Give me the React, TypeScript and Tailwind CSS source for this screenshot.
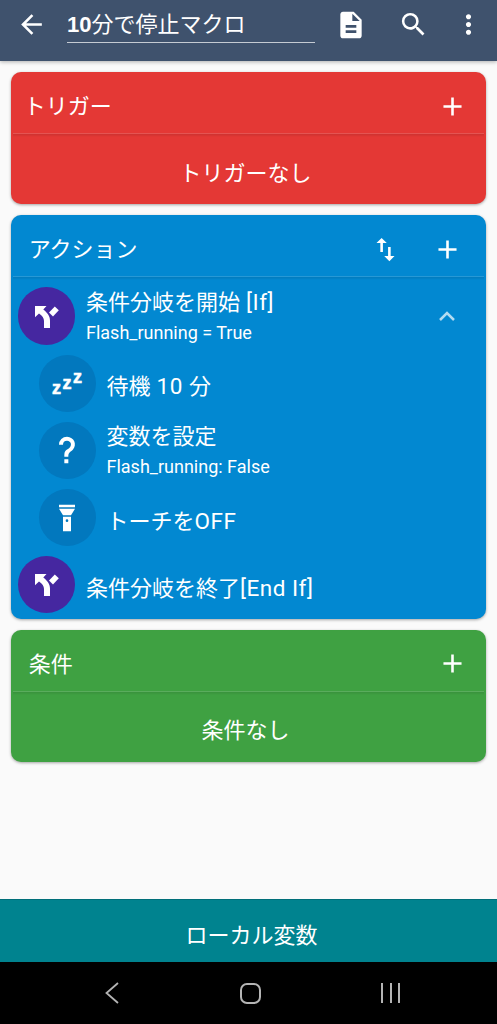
import type { ReactNode } from 'react';
import { MdAdd, MdArrowBack, MdDescription, MdMoreVert, MdSearch, MdSwapVert } from 'react-icons/md';

function SplitIcon() {
  return (
    <svg viewBox="0 0 24 23" className="ml-px h-[23px] w-6 translate-y-px" fill="currentColor">
      <path d="M0 0H11.5L8.3 3.6C12.8 7.2 15 10.3 15 14.8V22H9V15C9 12 7.4 9.6 4 7.4L0 11.3Z" />
      <path d="M19.8 .4L23.8 4.2L18 10.5L14 6.5Z" />
    </svg>
  );
}

function SleepIcon() {
  return (
    <svg
      viewBox="0 0 40 40"
      className="size-10 font-['Liberation_Sans'] text-[18px] font-bold"
      fill="currentColor"
      stroke="currentColor"
      strokeWidth=".6"
    >
      <text x="4.9" y="31">z</text>
      <text x="15.5" y="25.5">z</text>
      <text x="26" y="20.3">z</text>
    </svg>
  );
}

function HelpIcon() {
  return (
    <svg viewBox="0 0 24 24" className="size-8" fill="currentColor">
      <path d="M10 19h3v3h-3v-3m2-17c5.35.22 7.68 5.62 4.5 9.67-.83 1-2.17 1.66-2.83 2.5C13 15 13 16 13 17h-3c0-1.67 0-3.08.67-4.08.66-1 2-1.59 2.83-2.25C15.92 8.43 15.32 5.26 12 5a3 3 0 0 0-3 3H6a6 6 0 0 1 6-6z" />
    </svg>
  );
}

function TorchIcon() {
  return (
    <svg viewBox="0 0 24 24" className="size-8" fill="currentColor">
      <path d="M9 10L6 5h12l-3 5H9m9-6H6V2h12v2M9 22V11h6v11H9m3-9a1 1 0 0 0-1 1 1 1 0 0 0 1 1 1 1 0 0 0 1-1 1 1 0 0 0-1-1z" />
    </svg>
  );
}

function Divider() {
  return (
    <div className="mx-[2px] h-[4px] shrink-0 border-t border-white/15 bg-gradient-to-b from-black/10 to-transparent" />
  );
}

function Latin({ children }: { children: ReactNode }) {
  return <span className="text-[22.5px] tracking-[0.5px]">{children}</span>;
}

type RowProps = {
  icon: ReactNode;
  title: ReactNode;
  detail?: string;
  nested?: boolean;
  trailing?: ReactNode;
};

function ActionRow({ icon, title, detail, nested, trailing }: RowProps) {
  return (
    <div className={`flex h-[67.2px] items-center ${nested ? 'pl-[28px]' : 'pl-[7.5px]'}`}>
      <div
        className={`flex size-[57.3px] shrink-0 items-center justify-center rounded-full ${
          nested ? 'bg-[#0278be]' : 'bg-[#4527a0]'
        }`}
      >
        {icon}
      </div>
      <div className="ml-[10.5px] flex-1 whitespace-pre">
        <div className={detail ? 'mt-[3px] leading-[31px]' : 'mt-[7px] leading-[31px]'}>{title}</div>
        {detail && <div className="text-[18px] leading-[30px]">{detail}</div>}
      </div>
      {trailing}
    </div>
  );
}

function EmptyCard({ title, empty, className, titleClass }: { title: string; empty: string; className: string; titleClass: string }) {
  return (
    <section className={`flex h-[132px] flex-col rounded-[10px] shadow-[0_1px_3px_rgba(0,0,0,0.35)] ${className}`}>
      <div className="flex h-[61px] items-center justify-between pr-[18px] pt-[7px]">
        <h2 className={`pt-px ${titleClass}`}>{title}</h2>
        <MdAdd className="size-[31px]" />
      </div>
      <Divider />
      <p className="flex flex-1 items-center justify-center pr-[6px] pt-[5px]">{empty}</p>
    </section>
  );
}

export default function App() {
  return (
    <div className="flex h-[1024px] w-[497px] flex-col bg-[#fafafa] font-[Roboto,'Noto_Sans_CJK_JP',sans-serif] text-[22px] text-white">
      <header className="flex h-[61px] shrink-0 items-start bg-[#3f526d] pt-[9px] shadow-[0_1px_4px_rgba(0,0,0,0.3)]">
        <MdArrowBack className="ml-4 size-[31px]" />
        <div className="ml-5 h-[33.5px] w-[248px] border-b border-white/70 leading-[31px]">
          <span className="font-['Liberation_Sans'] font-bold">10</span>分で停止マクロ
        </div>
        <MdDescription className="ml-5 size-8" />
        <MdSearch className="ml-[31px] size-[31px]" />
        <MdMoreVert className="ml-[24px] size-[31px]" />
      </header>

      <main className="flex flex-1 flex-col gap-[11px] px-[10.7px] pt-[11px]">
        <EmptyCard title="トリガー" empty="トリガーなし" className="bg-[#e43835]" titleClass="pl-[13px]" />

        <section className="flex h-[403.5px] flex-col rounded-[10px] bg-[#0288d1] shadow-[0_1px_3px_rgba(0,0,0,0.35)]">
          <div className="flex h-[61px] items-center pl-[18px] pr-[23px] pt-[8px]">
            <h2 className="flex-1">アクション</h2>
            <MdSwapVert className="mr-[31px] size-[31px]" />
            <MdAdd className="size-[31px]" />
          </div>
          <Divider />
          <div className="mt-[2.5px]">
            <ActionRow
              icon={<SplitIcon />}
              title={<>条件分岐を開始<Latin> [If]</Latin></>}
              detail="Flash_running = True"
              trailing={
                <svg viewBox="0 0 16 10" className="mr-[31px] h-[10px] w-4" fill="none" stroke="#b3dbf1" strokeWidth="2.5">
                  <path d="M1 9L8 2L15 9" />
                </svg>
              }
            />
            <ActionRow nested icon={<SleepIcon />} title={<>待機<Latin> 10 </Latin>分</>} />
            <ActionRow nested icon={<HelpIcon />} title="変数を設定" detail="Flash_running: False" />
            <ActionRow nested icon={<TorchIcon />} title={<>トーチを<Latin>OFF</Latin></>} />
            <ActionRow icon={<SplitIcon />} title={<>条件分岐を終了<Latin>[End If]</Latin></>} />
          </div>
        </section>

        <EmptyCard title="条件" empty="条件なし" className="bg-[#3fa142]" titleClass="pl-[18px]" />
      </main>

      <div className="flex h-[63px] shrink-0 items-center justify-center border-t border-[#006f79] bg-[#00838f] pt-[8px] pl-[6px]">
        ローカル変数
      </div>

      <nav className="flex h-[62px] shrink-0 items-center bg-black text-[#b4b4b4]">
        <svg viewBox="0 0 14 22" className="ml-[105px] h-[22px] w-[14px]" fill="none" stroke="currentColor" strokeWidth="1.8">
          <path d="M13 1L1.5 11L13 21" />
        </svg>
        <div className="ml-[121px] size-[21px] rounded-[7px] border-2 border-current" />
        <div className="ml-[120px] flex h-5 w-[19px] justify-between">
          <i className="w-[2px] bg-current" />
          <i className="w-[2px] bg-current" />
          <i className="w-[2px] bg-current" />
        </div>
      </nav>
    </div>
  );
}
